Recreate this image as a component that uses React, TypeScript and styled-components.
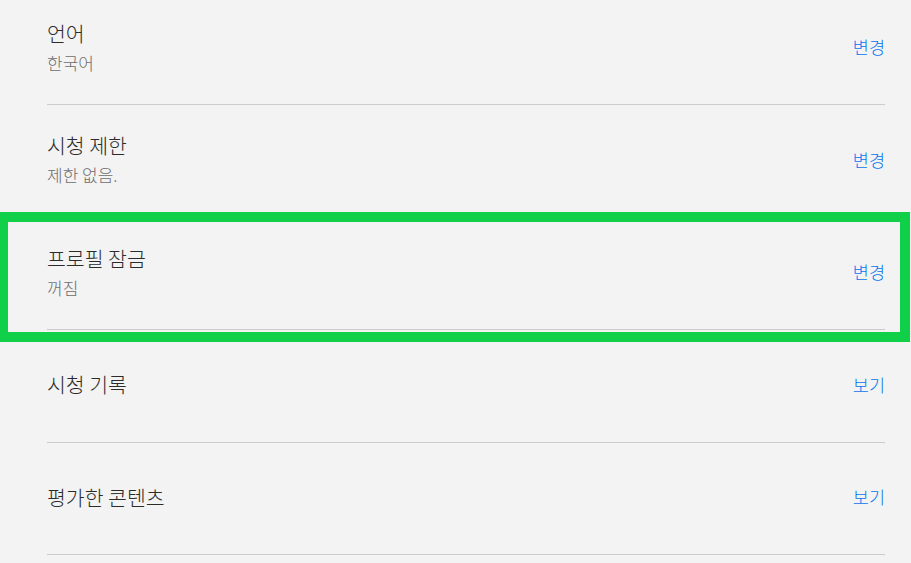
import styled, { createGlobalStyle } from 'styled-components'

const GlobalStyle = createGlobalStyle`
  html, body { margin: 0; padding: 0; background: #f3f3f3; overflow: hidden; }
  body { font-family: "Noto Sans CJK KR", "Noto Sans", sans-serif; }
`

const Page = styled.main`
  position: relative;
  width: 911px;
  height: 563px;
  overflow: hidden;
  background: #f3f3f3;
`

const List = styled.ul`
  list-style: none;
  margin: -7.5px 26px 0 47px;
  padding: 0;
`

const Row = styled.li`
  display: flex;
  align-items: center;
  justify-content: space-between;
  height: 111.5px;
  border-bottom: 1px solid #cccccc;
`

const Texts = styled.div`
  display: flex;
  flex-direction: column;
  gap: 4px;
  padding-bottom: 3px;
`

const Title = styled.div`
  font-size: 20.5px;
  font-weight: 300;
  line-height: 28px;
  color: #2b2b2b;
`

const Sub = styled.div`
  font-size: 17px;
  font-weight: 300;
  line-height: 24px;
  color: #6e6e6e;
`

const Action = styled.a`
  font-size: 17.5px;
  font-weight: 300;
  color: #0a74f0;
  text-decoration: none;
  cursor: pointer;
  padding-bottom: 3px;
`

const Highlight = styled.div`
  position: absolute;
  left: -2px;
  top: 212px;
  width: 892px;
  height: 110px;
  border: 10px solid #0fd048;
  pointer-events: none;
`

const rows = [
  { title: '언어', sub: '한국어', action: '변경' },
  { title: '시청 제한', sub: '제한 없음.', action: '변경' },
  { title: '프로필 잠금', sub: '꺼짐', action: '변경' },
  { title: '시청 기록', action: '보기' },
  { title: '평가한 콘텐츠', action: '보기' },
]

export default function App() {
  return (
    <>
      <GlobalStyle />
      <Page>
        <List>
          {rows.map((r) => (
            <Row key={r.title}>
              <Texts>
                <Title>{r.title}</Title>
                {r.sub && <Sub>{r.sub}</Sub>}
              </Texts>
              <Action>{r.action}</Action>
            </Row>
          ))}
        </List>
        <Highlight />
      </Page>
    </>
  )
}
